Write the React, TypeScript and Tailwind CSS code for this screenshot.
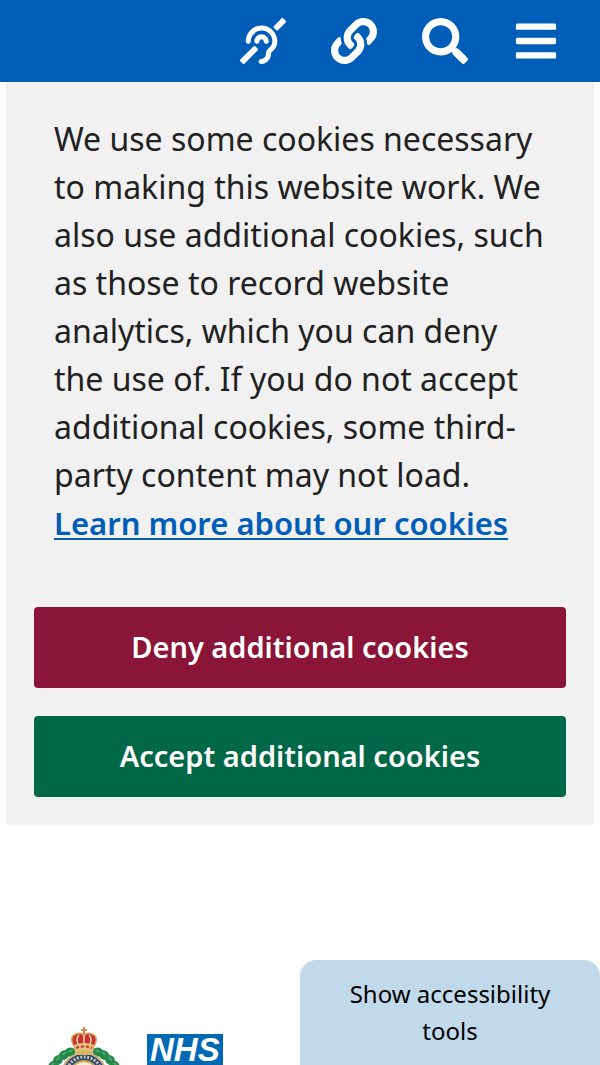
import React from 'react'
import { FaBars, FaDeaf, FaLink, FaSearch } from 'react-icons/fa'

const navItems = [
  { label: 'Accessibility', icon: FaDeaf },
  { label: 'Quick links', icon: FaLink },
  { label: 'Search', icon: FaSearch },
  { label: 'Menu', icon: FaBars }
]

// Leaves of the left half of the wreath, mirrored for the right half
const leaves = [
  { x: 24, y: 31, angle: -15 },
  { x: 18, y: 34, angle: -35 },
  { x: 12, y: 39, angle: -50 },
  { x: 7, y: 45, angle: -65 },
  { x: 6, y: 53, angle: -85 },
  { x: 8, y: 61, angle: -105 },
  { x: 12, y: 68, angle: -125 },
  { x: 19, y: 75, angle: -145 }
]

function TopBar() {
  return (
    <header className="bg-[#005eb8] h-[82px] shrink-0 flex items-center justify-end pr-[19px]">
      {navItems.map(({ label, icon: Icon }) => (
        <button key={label} type="button" aria-label={label} className="w-[91px] h-full flex items-center justify-center text-white">
          <Icon className="size-[46px]" />
        </button>
      ))}
    </header>
  )
}

function CookieBanner() {
  return (
    <section aria-label="Cookies" className="bg-[#f1f1f1] mx-1.5 px-7 pt-[33px] pb-7 rounded-b-sm">
      <p className="px-5 text-[32px] leading-[48px] text-[#212121]">
        We use some cookies necessary to making this website work. We also use additional cookies, such
        as those to record website analytics, which you can deny the use of. If you do not accept
        additional cookies, some third-party content may not load.{' '}
        <a href="#cookies" className="text-[31px] font-semibold text-[#005eb8] underline decoration-2 underline-offset-3">
          Learn more about our cookies
        </a>
      </p>
      <div className="mt-[60px] flex flex-col gap-7 text-[29px] font-semibold text-white">
        <button type="button" className="h-[81px] pb-0.5 rounded-sm bg-[#8a1538]">Deny additional cookies</button>
        <button type="button" className="h-[81px] pb-0.5 rounded-sm bg-[#006747]">Accept additional cookies</button>
      </div>
    </section>
  )
}

function WreathHalf() {
  return (
    <g>
      {leaves.map(({ x, y, angle }) => (
        <g key={y} transform={`translate(${x} ${y}) rotate(${angle})`}>
          <ellipse rx="5.5" ry="4.5" fill="#23894a" />
          <ellipse cx="1" cy="-1" rx="2.5" ry="1.2" fill="#4aa76b" />
        </g>
      ))}
    </g>
  )
}

function Crest() {
  return (
    <svg viewBox="0 0 76 88" className="w-[76px] h-[88px]" role="img" aria-label="Ambulance service crest">
      {/* Wreath */}
      <WreathHalf />
      <g transform="translate(76 0) scale(-1 1)">
        <WreathHalf />
      </g>
      {/* Badge */}
      <circle cx="38" cy="54" r="22" fill="#2c4478" stroke="#c9b072" strokeWidth="2" />
      <circle cx="38" cy="54" r="18" fill="none" stroke="#c8c5a8" strokeWidth="3" strokeDasharray="2 1.5" />
      <circle cx="38" cy="54" r="14" fill="#f3efdf" stroke="#c9a548" strokeWidth="2" />
      {/* Crown */}
      <path d="M29 27 Q22 16 30 13 Q36 11 38 15 Q40 11 46 13 Q54 16 47 27 Z" fill="#c8322f" stroke="#d3a45c" strokeWidth="1.5" />
      <path d="M33 25Q29 18 33 14M43 25Q47 18 43 14M38 13V26" fill="none" stroke="#f0d9a5" strokeWidth="1.5" />
      <path d="M38 6V14M35 9H41" stroke="#c98a4b" strokeWidth="2" />
      <path d="M28 24Q38 20 48 24L47 30Q38 27 29 30Z" fill="#e2c27e" />
      <path d="M30 27Q38 24 46 27" fill="none" stroke="#c8322f" strokeWidth="2" strokeDasharray="3 2" />
      <path d="M29 30Q38 27 47 30L46 34H30Z" fill="#d9b75f" />
    </svg>
  )
}

export default function App() {
  return (
    <div className="h-screen overflow-hidden flex flex-col bg-white font-['Noto_Sans','Open_Sans',sans-serif]">
      <TopBar />
      <main>
        <CookieBanner />
        <div className="mt-[196px] ml-[46px] flex items-start gap-[25px]">
          <Crest />
          <div className="mt-[13px] px-[3px] bg-[#0069b4] text-white text-[33px] leading-[31px] font-bold italic font-['Liberation_Sans',sans-serif]">
            NHS
          </div>
        </div>
      </main>
      <button type="button" className="fixed bottom-0 right-0 w-1/2 h-[105px] px-10 pb-0.5 rounded-t-2xl bg-[#c0daec] text-black text-2xl leading-[37px]">
        Show accessibility tools
      </button>
    </div>
  )
}
